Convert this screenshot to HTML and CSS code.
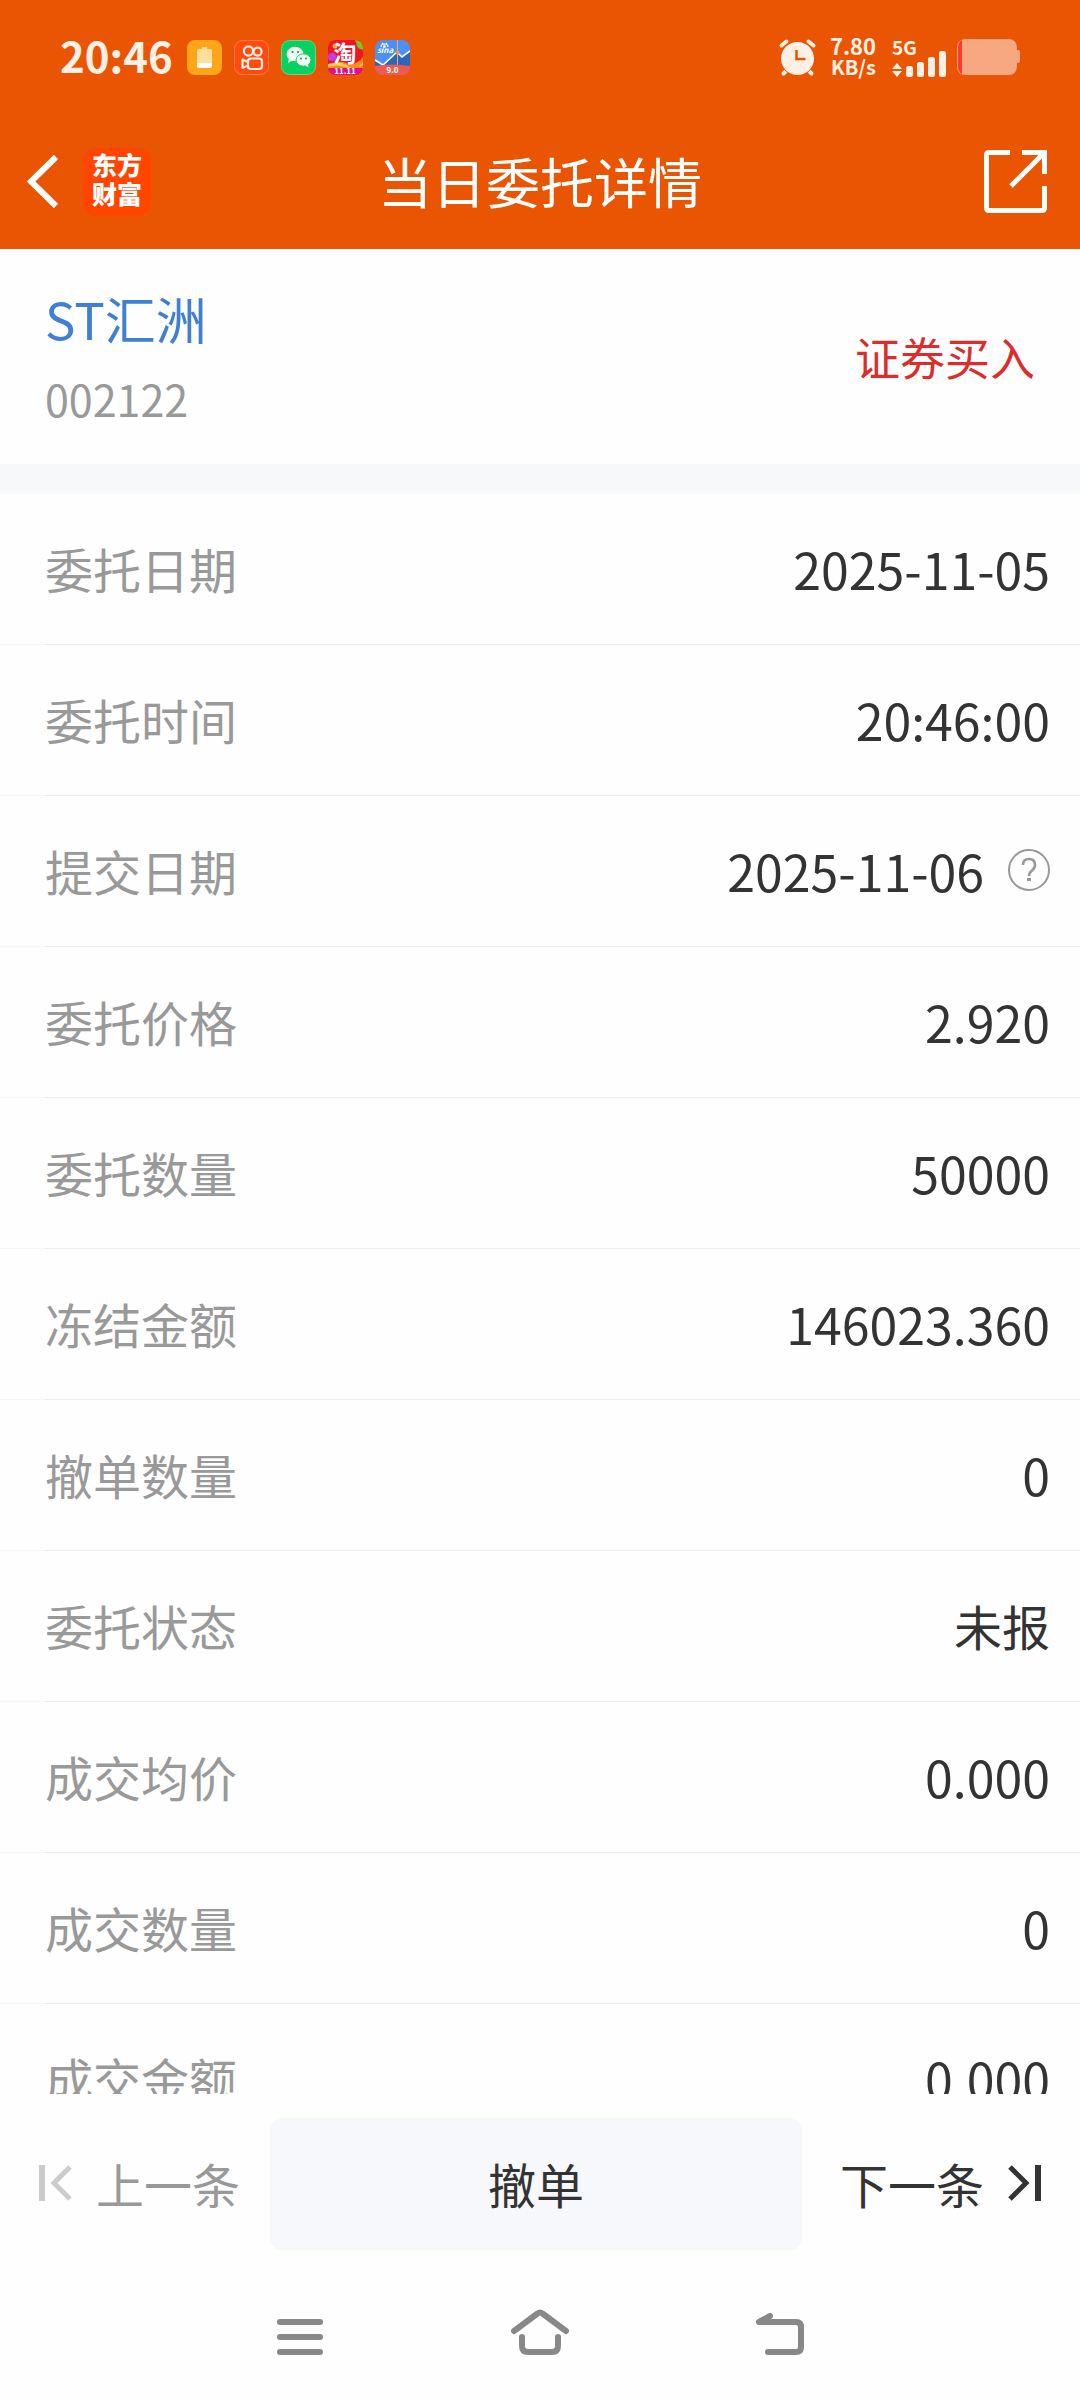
FILE: index.html
```html
<!DOCTYPE html>
<html lang="zh-CN">
<head>
    <meta charset="UTF-8">
    <meta name="viewport" content="width=device-width, initial-scale=1.0">
    <title>当日委托详情</title>
    <link rel="stylesheet" href="styles.css">
</head>
<body>
    <header class="header">
        <div class="status-bar">
            <span class="clock">20:46</span>
            <div class="app-icons">
                <svg viewBox="0 0 35 35">
                    <rect width="35" height="35" rx="8" fill="#ffa51a"/>
                    <path d="M15 7h5v2h3q2 0 2 2v12H10V11q0-2 2-2h3z" fill="#ffdf9e"/>
                    <path d="M10 23h15v3q0 2-2 2H12q-2 0-2-2z" fill="#fff"/>
                </svg>
                <svg viewBox="0 0 35 35">
                    <rect x=".5" y=".5" width="34" height="34" rx="8" fill="#ff4a10" stroke="#ff7a45"/>
                    <g fill="none" stroke="#fff0e5" stroke-width="2.2" stroke-linejoin="round">
                        <circle cx="14.5" cy="11" r="4.6"/>
                        <circle cx="23.6" cy="11.6" r="4"/>
                        <rect x="14" y="18.500" width="14" height="10.500" rx="3"/>
                        <path d="M14 22l-5.500-2.500v8.500L14 25.500"/>
                    </g>
                </svg>
                <svg viewBox="0 0 35 35">
                    <rect x=".5" y=".5" width="34" height="34" rx="8" fill="#07d160" stroke="#5fd98e"/>
                    <ellipse cx="14" cy="14" rx="8.500" ry="7.200" fill="#f4fff4"/>
                    <path d="M8 18l-1 5 5-3z" fill="#f4fff4"/>
                    <ellipse cx="22.500" cy="20" rx="7.500" ry="6.200" fill="#f4fff4" stroke="#07d160"/>
                    <path d="M24 25l3.500 2.500-.5-4z" fill="#f4fff4"/>
                    <g fill="#0a9c4c">
                        <circle cx="11.500" cy="12" r="1.100"/><circle cx="17" cy="12" r="1.100"/>
                        <circle cx="20" cy="18.500" r="1"/><circle cx="25" cy="18.500" r="1"/>
                    </g>
                </svg>
                <svg viewBox="0 0 35 35">
                    <defs><clipPath id="tile"><rect width="35" height="35" rx="8"/></clipPath></defs>
                    <g clip-path="url(#tile)">
                        <rect width="35" height="35" fill="#f01428"/>
                        <circle cx="4" cy="17" r="4" fill="#c53cf0"/>
                        <path d="M0 27Q9 19 18 23T35 17v12H0z" fill="#ff8a1c"/>
                        <path d="M0 24Q12 20 20 26T35 22v3Q26 30 17 27T0 27z" fill="#ffd05a"/>
                        <rect y="28" width="35" height="7" fill="#e0108c"/>
                        <path d="M27 0l8 1v9l-5-2z" fill="#7ac623"/>
                        <circle cx="7" cy="6" r="2.500" fill="#ffb43c"/>
                    </g>
                    <text x="17" y="22" class="tile-big">淘</text>
                    <text x="17" y="34" class="tile-small">11.11</text>
                </svg>
                <svg viewBox="0 0 35 35">
                    <g clip-path="url(#tile)">
                        <rect width="35" height="35" fill="#4c8ff5"/>
                        <path d="M0 20l8 5 14-13 5 5 8-6v16H0z" fill="#2b65bd"/>
                        <path d="M0 20l8 5 14-13 5 5 8-6" fill="none" stroke="#fff" stroke-width="1.600"/>
                        <path d="M22.500 0v26" stroke="#e0b070" stroke-width="1"/>
                        <circle cx="22.500" cy="12.500" r="2" fill="#f29b38"/>
                        <path d="M0 26Q17 23 35 26v9H0z" fill="#ee5a50"/>
                    </g>
                    <path d="M6 7q0-3 3.500-3T13 7M8 4l-1-1M11 4l1-1" fill="none" stroke="#fff" stroke-width="1.200"/>
                    <circle cx="9.500" cy="6.500" r="1.300" fill="#fff"/>
                    <text x="10" y="13" class="tile-sina">sina</text>
                    <text x="17.500" y="33" class="tile-small">9.0</text>
                </svg>
            </div>
            <div class="status-right">
                <svg class="alarm" viewBox="0 0 37 37">
                    <g stroke="#fff0e5" stroke-width="4" stroke-linecap="round">
                        <path d="M2.500 6.500l5-4M34.500 6.500l-5-4M8 31l-3.500 3.500M29 31l3.500 3.500"/>
                    </g>
                    <circle cx="18.500" cy="19.500" r="17.500" fill="#ea5504"/>
                    <circle cx="18.500" cy="19.500" r="16.500" fill="#fff0e5"/>
                    <path d="M17.500 11v9h9" fill="none" stroke="#ea5504" stroke-width="2.600"/>
                </svg>
                <div class="speed"><span class="speed-value">7.80</span><span>KB/s</span></div>
                <div class="signal">
                    <span>5G</span>
                    <svg viewBox="0 0 55 26">
                        <g fill="#fff0e5">
                            <path d="M5 12l5 6H0zM5 26l-5-6h10z"/>
                            <rect x="14" y="15" width="7" height="11" rx="2.500"/>
                            <rect x="25" y="11" width="7" height="15" rx="2.500"/>
                            <rect x="36" y="6" width="7" height="20" rx="2.500"/>
                            <rect x="47" y="0" width="7" height="26" rx="2.500"/>
                        </g>
                    </svg>
                </div>
                <svg class="battery" viewBox="0 0 63 36">
                    <path d="M9 0h42q9 0 9 9v2h1q2 0 2 2v9q0 2-2 2h-1v3q0 9-9 9H9q-9 0-9-9V9q0-9 9-9z" fill="#f7a880"/>
                    <path d="M5 1v34Q1 33 1 27V9q0-6 4-8z" fill="#ff3b2f"/>
                </svg>
            </div>
        </div>
        <div class="title-bar">
            <div class="title-left">
                <button type="button" class="icon-btn" aria-label="返回">
                    <svg class="back-icon" viewBox="0 0 32 55">
                        <path d="M29 3L4 27.500 29 52" fill="none" stroke="#fff" stroke-width="6"/>
                    </svg>
                </button>
                <a href="#" class="logo">东方<br>财富</a>
            </div>
            <h1>当日委托详情</h1>
            <button type="button" class="icon-btn share-btn" aria-label="分享">
                <svg class="share-icon" viewBox="0 0 63 63">
                    <g fill="none" stroke="#fff" stroke-width="5">
                        <path d="M26 2.500H5q-2.500 0-2.500 2.500v53q0 2.500 2.500 2.500h53q2.500 0 2.500-2.500V36"/>
                        <path d="M38 2.500h22.500V24M60 3L27 36"/>
                    </g>
                </svg>
            </button>
        </div>
    </header>

    <section class="stock-card">
        <div class="stock">
            <div class="stock-name">ST汇洲</div>
            <div class="stock-code">002122</div>
        </div>
        <div class="trade-type">证券买入</div>
    </section>

    <dl class="detail-list">
        <div class="row"><dt>委托日期</dt><dd>2025-11-05</dd></div>
        <div class="row"><dt>委托时间</dt><dd>20:46:00</dd></div>
        <div class="row">
            <dt>提交日期</dt>
            <dd>2025-11-06
                <button type="button" class="icon-btn" aria-label="说明">
                    <svg class="help-icon" viewBox="0 0 42 42">
                        <g fill="none" stroke="#999">
                            <circle cx="21" cy="21" r="20" stroke-width="2"/>
                            <path d="M15 16q0-6 6-6t6 6q0 3-3 5.500t-3 5.500" stroke-width="2.600"/>
                        </g>
                        <rect x="19" y="29" width="4" height="3" fill="#999"/>
                    </svg>
                </button>
            </dd>
        </div>
        <div class="row"><dt>委托价格</dt><dd>2.920</dd></div>
        <div class="row"><dt>委托数量</dt><dd>50000</dd></div>
        <div class="row"><dt>冻结金额</dt><dd>146023.360</dd></div>
        <div class="row"><dt>撤单数量</dt><dd>0</dd></div>
        <div class="row"><dt>委托状态</dt><dd class="text">未报</dd></div>
        <div class="row"><dt>成交均价</dt><dd>0.000</dd></div>
        <div class="row"><dt>成交数量</dt><dd>0</dd></div>
        <div class="row"><dt>成交金额</dt><dd>0.000</dd></div>
    </dl>

    <footer class="actions">
        <button type="button" class="btn btn-prev">
            <svg viewBox="0 0 33 36">
                <path d="M0 0h6v36H0z" fill="#ccc"/>
                <path d="M31 2L15 18l16 16" fill="none" stroke="#ccc" stroke-width="5"/>
            </svg>
            上一条
        </button>
        <button type="button" class="btn btn-cancel">撤单</button>
        <button type="button" class="btn btn-next">
            下一条
            <svg viewBox="0 0 33 36">
                <path d="M27 0h6v36h-6z" fill="#333"/>
                <path d="M2 2l16 16L2 34" fill="none" stroke="#333" stroke-width="5"/>
            </svg>
        </button>
    </footer>

    <nav class="system-nav">
        <button type="button" class="icon-btn" aria-label="最近任务">
            <svg viewBox="0 0 60 48">
                <path d="M10 10h40M10 25h40M10 40h40"/>
            </svg>
        </button>
        <button type="button" class="icon-btn" aria-label="主页">
            <svg viewBox="0 0 60 48">
                <path d="M4 19L27.500 1.500q2.500-2 5 0L56 19M12 25v9q0 6 6 6h24q6 0 6-6v-9"/>
            </svg>
        </button>
        <button type="button" class="icon-btn" aria-label="返回上一页">
            <svg viewBox="0 0 60 48">
                <path d="M20 4L9 10h37q5 0 5 5v20q0 5-5 5H18"/>
            </svg>
        </button>
    </nav>
</body>
</html>
```

FILE: styles.css
```css
:root {
    --primary-color: #ea5504;
    --status-color: #fff0e5;
    --text-color: #333;
    --light-text: #999;
    --panel-color: #f7f8fa;
}

* {
    margin: 0;
    padding: 0;
    box-sizing: border-box;
}

body {
    display: flex;
    flex-direction: column;
    height: 100vh;
    font-family: "Noto Sans CJK SC", sans-serif;
    font-size: 48px;
    color: var(--text-color);
    background-color: #fefefe;
}

button {
    border: none;
    background: none;
    font: inherit;
    color: inherit;
    cursor: pointer;
}

svg {
    display: block;
    flex-shrink: 0;
    overflow: visible;
}

.icon-btn {
    display: flex;
}

.header {
    background-color: var(--primary-color);
    color: #fff;
}

/* status bar */
.status-bar {
    display: flex;
    align-items: center;
    height: 114px;
    padding: 0 60px;
    color: var(--status-color);
}

.clock {
    padding-bottom: 4px;
    font-size: 42px;
    font-weight: 700;
    line-height: 48px;
}

.app-icons {
    display: flex;
    gap: 12px;
    margin-left: 14px;
}

.app-icons svg {
    width: 35px;
    height: 35px;
}

.tile-big,
.tile-small,
.tile-sina {
    fill: #fff;
    text-anchor: middle;
    font-weight: 700;
}

.tile-big {
    font-size: 23px;
}

.tile-small {
    font-size: 8px;
}

.tile-sina {
    font-size: 8px;
    font-style: italic;
}

.status-right {
    display: flex;
    align-items: center;
    margin-left: auto;
}

.alarm {
    width: 37px;
    height: 37px;
    margin-right: 14px;
}

.speed {
    display: flex;
    flex-direction: column;
    align-items: flex-end;
    margin-right: 16px;
    padding-bottom: 2px;
    font-size: 20px;
    font-weight: 700;
    line-height: 21px;
}

.speed-value {
    font-size: 22px;
}

.signal {
    margin-right: 10px;
    font-size: 19px;
    font-weight: 700;
}

.signal span {
    display: block;
    height: 13px;
    line-height: 18px;
}

.signal svg {
    width: 55px;
    height: 26px;
}

.battery {
    width: 63px;
    height: 36px;
}

/* title bar */
.title-bar {
    display: grid;
    grid-template-columns: 1fr auto 1fr;
    align-items: center;
    height: 135px;
    padding: 0 27px;
}

.title-left {
    display: flex;
    align-items: center;
    gap: 24px;
}

.title-bar h1 {
    padding-bottom: 2px;
    font-size: 54px;
    font-weight: 400;
    line-height: 72px;
}

.back-icon {
    width: 32px;
    height: 55px;
}

.logo {
    width: 68px;
    height: 68px;
    padding-top: 2px;
    border-radius: 14px;
    background-color: #ff4500;
    color: #fff;
    font-size: 25px;
    font-weight: 900;
    line-height: 29px;
    text-align: center;
    text-decoration: none;
}

.share-btn {
    justify-self: end;
    margin-right: 6px;
}

.share-icon {
    width: 63px;
    height: 63px;
}

/* stock card */
.stock-card {
    display: flex;
    align-items: center;
    justify-content: space-between;
    padding: 0 45px;
    border-bottom: 30px solid var(--panel-color);
}

.stock {
    padding: 29px 0 26px;
    line-height: 80px;
}

.stock-name {
    font-size: 51px;
    color: #3f80d2;
}

.stock-code {
    font-size: 43px;
    color: var(--light-text);
}

.trade-type {
    font-size: 45px;
    color: #dc2c2c;
}

/* order details */
.detail-list {
    flex: 1;
    min-height: 0;
    overflow: hidden;
}

.row {
    display: flex;
    align-items: center;
    justify-content: space-between;
    height: 151px;
    padding: 0 30px 4px 45px;
    background: linear-gradient(to right, #f7f7f7 45px, #ebebeb 45px) bottom / 100% 1px no-repeat;
}

.row dt {
    color: var(--light-text);
}

.row dd {
    display: flex;
    align-items: center;
    gap: 24px;
    font-size: 50px;
}

.row .text {
    font-size: 48px;
}

.help-icon {
    width: 42px;
    height: 42px;
}

/* bottom actions */
.actions {
    display: flex;
    gap: 30px;
    padding: 24px 39px 18px;
}

.btn {
    display: flex;
    align-items: center;
    justify-content: center;
    gap: 24px;
    height: 132px;
    padding-bottom: 2px;
    white-space: nowrap;
}

.btn svg {
    width: 33px;
    height: 36px;
}

.btn-prev {
    color: var(--light-text);
}

.btn-cancel {
    flex: 1;
    border-radius: 12px;
    background-color: #f7f8fb;
}

.btn-next {
    padding-left: 8px;
}

.system-nav {
    display: flex;
    justify-content: center;
    gap: 180px;
    padding: 44px 0 40px;
}

.system-nav svg {
    width: 60px;
    height: 48px;
    fill: none;
    stroke: #888;
    stroke-width: 6;
    stroke-linecap: round;
    stroke-linejoin: round;
}
```
